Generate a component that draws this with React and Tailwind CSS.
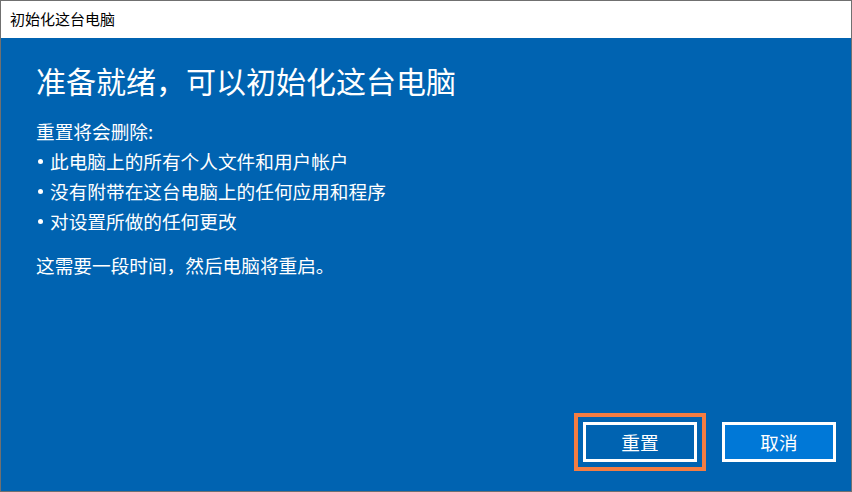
export default function App() {
  const items = [
    "此电脑上的所有个人文件和用户帐户",
    "没有附带在这台电脑上的任何应用和程序",
    "对设置所做的任何更改",
  ];

  return (
    <div
      className="w-[852px] h-[492px] border border-[#707070] bg-white flex flex-col"
      style={{ fontFamily: '"Noto Sans CJK SC", "Noto Sans", sans-serif' }}
    >
      <div className="h-[37px] shrink-0 flex items-center pl-[9px] text-[15px] text-black bg-white">
        初始化这台电脑
      </div>

      <div className="flex-1 bg-[#0063b1] text-white flex flex-col pl-[35px] pt-[22px]">
        <h1 className="text-[30px] leading-[40px] font-normal">
          准备就绪，可以初始化这台电脑
        </h1>

        <div className="mt-[16px] text-[18.67px] leading-[30px]">
          <p>重置将会删除:</p>
          {items.map((item) => (
            <p key={item} className="flex items-center">
              <span className="inline-block w-[5px] h-[5px] rounded-full bg-white ml-[2px] mr-[7px]" />
              {item}
            </p>
          ))}
          <p className="mt-[14px]">这需要一段时间，然后电脑将重启。</p>
        </div>

        <div className="mt-auto flex justify-end gap-[25px] pr-[15px] pb-[29px]">
          <button className="w-[114px] h-[40px] border-[3px] border-white bg-[#0063b1] text-white text-[18.67px] outline-4 outline-solid outline-offset-[5px] outline-[#f47d42]">
            重置
          </button>
          <button className="w-[114px] h-[40px] border-[3px] border-white bg-[#0078d7] text-white text-[18.67px]">
            取消
          </button>
        </div>
      </div>
    </div>
  );
}
